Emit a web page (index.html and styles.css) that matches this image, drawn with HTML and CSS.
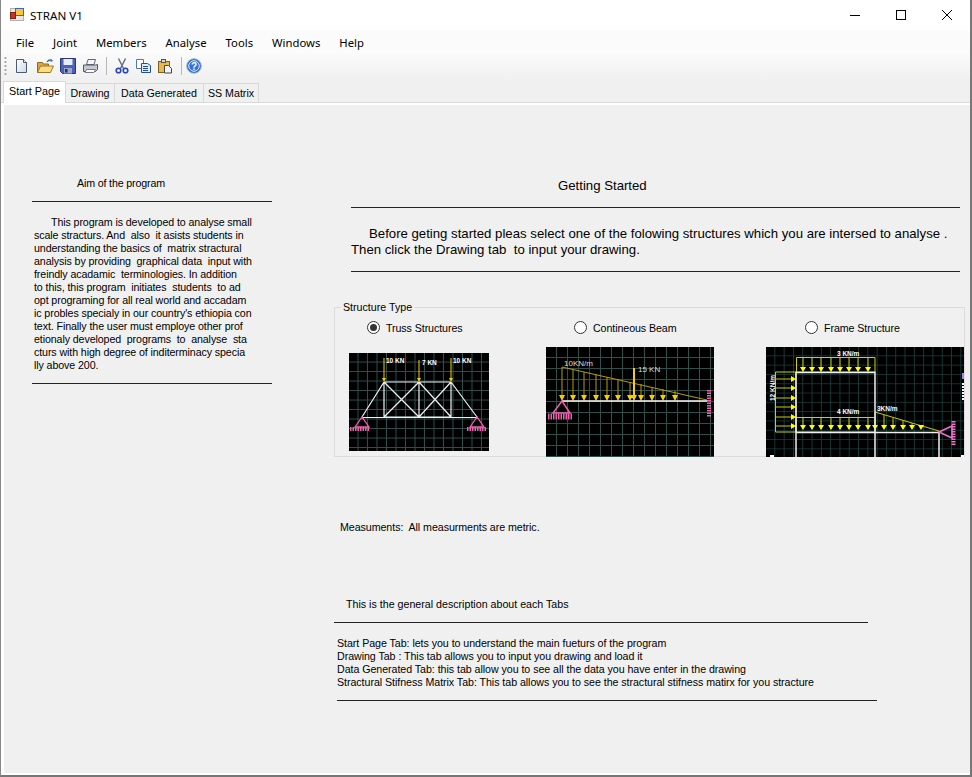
FILE: index.html
```html
<!DOCTYPE html>
<html lang="en">
<head>
<meta charset="utf-8">
<title>STRAN V1</title>
<link rel="stylesheet" href="styles.css">
</head>
<body>
<div class="window">
  <header class="titlebar">
    <svg class="appicon" width="16" height="16" viewBox="0 0 16 16"><rect x="1.500" y="1.500" width="13" height="12" fill="#e8e8e8" stroke="#b0b0b0"/><rect x="6.500" y="1.500" width="8" height="7" fill="#f5c542" stroke="#3a6ab0"/><rect x="1.500" y="5.500" width="5" height="6" fill="#d03020" stroke="#802010"/></svg>
    <span class="title">STRAN V1</span>
    <div class="winbtns">
      <svg width="12" height="12" viewBox="0 0 12 12"><path d="M1 6.500h10" stroke="#000" fill="none"/></svg>
      <svg width="12" height="12" viewBox="0 0 12 12"><rect x="1.500" y="1.500" width="9" height="9" stroke="#000" fill="none"/></svg>
      <svg width="12" height="12" viewBox="0 0 12 12"><path d="M1 1l10 10M11 1L1 11" stroke="#000" fill="none"/></svg>
    </div>
  </header>
  <nav class="menubar">
    <span>File</span><span>Joint</span><span>Members</span><span>Analyse</span><span>Tools</span><span>Windows</span><span>Help</span>
  </nav>
  <div class="toolbar">
    <svg class="grip" width="3" height="20" viewBox="0 0 3 20"><path d="M1.500 1v18" stroke="#aaa" stroke-width="2" stroke-dasharray="2 2"/></svg>
    <svg class="tool" width="16" height="16" viewBox="0 0 16 16"><defs><linearGradient id="pg" x1="0" y1="0" x2="1" y2="1"><stop offset="0" stop-color="#fff"/><stop offset="1" stop-color="#cfd8e6"/></linearGradient></defs><path d="M2.500 1.500h7l3 3v10h-10z" fill="url(#pg)" stroke="#4a5a70"/><path d="M9.500 1.500v3h3" fill="#e8eef6" stroke="#4a5a70"/></svg>
    <svg class="tool" width="18" height="16" viewBox="0 0 18 16"><path d="M1.500 4.500h5l1 1.500h5v8.500h-11z" fill="#d8a848" stroke="#8a6a20"/><path d="M1.500 14.500l3-6.500h13l-3 6.500z" fill="#f8dc88" stroke="#a07820"/><path d="M11 4q2-3 5-1.500" stroke="#3a6ab0" stroke-width="1.300" fill="none"/><path d="M15 1l2 2-2.500 1z" fill="#3a6ab0"/></svg>
    <svg class="tool" width="16" height="16" viewBox="0 0 16 16"><path d="M.5.5h15v15H2.500l-2-2z" fill="#4f5fb8" stroke="#2a3680"/><rect x="3.500" y="1" width="9" height="6" fill="#e8ecf8"/><rect x="4" y="10" width="8" height="5.500" fill="#9aa6d0"/><rect x="5" y="11" width="2.500" height="3.500" fill="#20306a"/></svg>
    <svg class="tool" width="16" height="16" viewBox="0 0 16 16"><path d="M4.500 6.500l1.500-5h7.500l-1.500 5z" fill="#f4f6fa" stroke="#667"/><path d="M1.500 7h12l2-.5v5l-2 2h-12z" fill="#c4cad4" stroke="#556"/><path d="M3 14.500h9l1.500-3h-9z" fill="#fff" stroke="#778"/></svg>
    <i class="sep"></i>
    <svg class="tool" width="14" height="16" viewBox="0 0 14 16"><path d="M3.500 .5l5 10M10.500 .5l-5 10" stroke="#687080" stroke-width="1.500" fill="none"/><circle cx="3.500" cy="12.500" r="2.300" fill="none" stroke="#2a44c0" stroke-width="1.600"/><circle cx="10.500" cy="12.500" r="2.300" fill="none" stroke="#2a44c0" stroke-width="1.600"/></svg>
    <svg class="tool" width="16" height="16" viewBox="0 0 16 16"><path d="M1.500 1.500h7v9h-7z" fill="#fff" stroke="#4a78b8"/><path d="M6.500 5.500h6l3 2v7h-9z" fill="#dfeaf8" stroke="#24508c"/><path d="M8 8.500h5M8 10.500h5M8 12.500h5" stroke="#24508c"/></svg>
    <svg class="tool" width="16" height="16" viewBox="0 0 16 16"><rect x="1.500" y="3.500" width="11" height="11" fill="#e8b848" stroke="#806020"/><rect x="4.500" y="1.500" width="4" height="3" fill="#d8d8d8" stroke="#555"/><path d="M7.500 7.500h4l3 3v4.500h-7z" fill="#f4f4f4" stroke="#444"/></svg>
    <i class="sep sep-last"></i>
    <svg class="tool tool-help" width="16" height="16" viewBox="0 0 16 16"><circle cx="8" cy="8" r="7.300" fill="#2a62c0" stroke="#9ab8e0"/><circle cx="8" cy="8" r="5.300" fill="#2f74d8" stroke="#e6f0fc"/><text class="helpq" x="8" y="11.500" text-anchor="middle">?</text></svg>
  </div>
  <div class="tabs">
    <span class="tab active">Start Page</span>
    <span class="tab t-draw">Drawing</span>
    <span class="tab t-data">Data Generated</span>
    <span class="tab t-ss">SS Matrix</span>
  </div>
  <main class="page">
    <aside class="aim">
      <h2 class="aim-head">Aim of the program</h2>
      <p class="aim-text"><span class="ind">This program is developed to analyse small</span><br>scale stracturs. And&nbsp; also&nbsp; it asists students in<br>understanding the basics of&nbsp; matrix stractural<br>analysis by providing&nbsp; graphical data&nbsp; input with<br>freindly acadamic&nbsp; terminologies. In addition<br>to this, this program&nbsp; initiates&nbsp; students&nbsp; to ad<br>opt programing for all real world and accadam<br>ic probles specialy in our country's ethiopia con<br>text. Finally the user must employe other prof<br>etionaly developed&nbsp; programs&nbsp; to&nbsp; analyse&nbsp; sta<br>cturs with high degree of inditerminacy specia<br>lly above 200.</p>
    </aside>
    <section class="main">
      <div class="start">
        <h1 class="start-head">Getting Started</h1>
        <p class="start-text"><span class="ind2">Before geting started pleas select one of the folowing structures which you are intersed to analyse .</span><br>Then click the Drawing tab&nbsp; to input your drawing.</p>
      </div>
      <fieldset class="types">
        <legend>Structure Type</legend>
        <div class="type type-truss">
          <label class="radio"><i class="dot on"></i>Truss Structures</label>
          <svg class="pic truss" width="140" height="98" viewBox="0 0 140 98">
            <defs>
              <pattern id="g1" width="9.500" height="9.500" patternUnits="userSpaceOnUse"><path d="M9 0v9.500M0 9h9.500" stroke="#2f4f4d" fill="none"/></pattern>
              <pattern id="g2" width="11" height="11" patternUnits="userSpaceOnUse"><path d="M10.500 0v11M0 10.500h11" stroke="#2f4f4d" fill="none"/></pattern>
              <pattern id="g3" width="9.300" height="9.300" patternUnits="userSpaceOnUse"><path d="M9 0v9.300M0 9h9.300" stroke="#1a4240" fill="none"/></pattern>
            </defs>
            <rect width="140" height="98" fill="#000"/><rect width="140" height="98" fill="url(#g1)"/>
            <path d="M35 29H102M35 64H102M13 64.500H128M13 64L35 29M102 29L128 64M35 29V64M70 29V64M102 29V64M35 29L70 64M70 29L35 64M70 29L102 64M102 29L70 64" stroke="#f2f2f2" stroke-width="1.200" fill="none"/>
            <path d="M35 5V26M70 7V26M102 5V26" stroke="#f4d000"/>
            <path d="M33 25h4l-2 4zM68 25h4l-2 4zM100 25h4l-2 4z" fill="#f4d000"/>
            <path d="M13 64L6 74H20ZM128 64L121 74H135Z" fill="none" stroke="#f060b0" stroke-width="1.300"/>
            <path d="M1 76H21M118 76H138" stroke="#f060b0" stroke-width="4" stroke-dasharray="1.500 1"/>
            <text class="lbl" x="37" y="10">10 KN</text><text class="lbl" x="73" y="12">7 KN</text><text class="lbl" x="104" y="10">10 KN</text>
          </svg>
        </div>
        <div class="type type-beam">
          <label class="radio"><i class="dot"></i>Contineous Beam</label>
          <svg class="pic beam" width="168" height="110" viewBox="0 0 168 110">
            <rect width="168" height="110" fill="#000"/><rect width="168" height="110" fill="url(#g2)"/>
            <path d="M16 20L161 53" stroke="#b89c00" fill="none"/>
            <path d="M16 20V49M27 22V49M38 25V49M50 27V49M61 30V49M72 32V49M84 35V49M95 37V49M106 40V49M117 42V49M129 44V49" stroke="#b89c00" fill="none"/>
            <path d="M88 21V49" stroke="#f4d000" stroke-width="2"/>
            <path d="M13 48h6l-3 6zM24 48h6l-3 6zM35 48h6l-3 6zM47 48h6l-3 6zM58 48h6l-3 6zM69 48h6l-3 6zM81 48h6l-3 6zM85 48h6l-3 6zM92 48h6l-3 6zM103 48h6l-3 6zM114 48h6l-3 6zM126 48h6l-3 6z" fill="#f4d000"/>
            <path d="M16 54H161" stroke="#fff" stroke-width="1.500"/>
            <path d="M16 54L7 66H24Z" fill="none" stroke="#f060b0" stroke-width="1.500"/>
            <path d="M2 69.500H27" stroke="#f060b0" stroke-width="6" stroke-dasharray="1.500 1"/>
            <path d="M163 43V70" stroke="#f060b0" stroke-width="4" stroke-dasharray="1.500 1"/>
            <text class="lbl big" x="18" y="18.500">10KN/m</text><text class="lbl big" x="92" y="25">15 KN</text>
          </svg>
        </div>
        <div class="type type-frame">
          <label class="radio"><i class="dot"></i>Frame Structure</label>
          <svg class="pic frame" width="198" height="110" viewBox="0 0 198 110">
            <rect width="198" height="110" fill="#000"/><rect width="198" height="110" fill="url(#g3)"/>
            <path d="M30.500 10.500H109V25H30.500ZM9.500 25H30V85H9.500ZM30 70.500H109V85H30Z" fill="none" stroke="#d0d000"/>
            <path d="M109 65L173 84M37 11V20M46 11V20M55 11V20M65 11V20M74 11V20M83 11V20M92 11V20M102 11V20M37 71V78M46 71V78M55 71V78M65 71V78M74 71V78M83 71V78M92 71V78M102 71V78M109 66V78M118 68V78M127 71V78M137 73V78M146 76V78M9 32H25M9 41H25M9 51H25M9 60H25M9 70H25M9 79H25" stroke="#c8c800" fill="none"/>
            <path d="M34 20h6l-3 5zM43 20h6l-3 5zM52 20h6l-3 5zM62 20h6l-3 5zM71 20h6l-3 5zM80 20h6l-3 5zM89 20h6l-3 5zM99 20h6l-3 5zM34 78h6l-3 5zM43 78h6l-3 5zM52 78h6l-3 5zM62 78h6l-3 5zM71 78h6l-3 5zM80 78h6l-3 5zM89 78h6l-3 5zM99 78h6l-3 5zM106 78h6l-3 5zM115 78h6l-3 5zM124 78h6l-3 5zM134 78h6l-3 5zM143 78h6l-3 5zM152 78h6l-3 5zM25 29v6l5-3zM25 38v6l5-3zM25 48v6l5-3zM25 57v6l5-3zM25 67v6l5-3zM25 76v6l5-3z" fill="#ffff00"/>
            <path d="M30 110V25.500H109V110M30 85.500H173V110" stroke="#f0f0f0" stroke-width="1.500" fill="none"/>
            <path d="M173 85L186 79V91Z" fill="none" stroke="#f070d0" stroke-width="1.500"/>
            <path d="M187.500 74V98" stroke="#f070d0" stroke-width="4" stroke-dasharray="1.500 1"/>
            <path d="M4 109h4M195 109h3" stroke="#fff" stroke-width="2"/>
            <path d="M197 26v6" stroke="#b080e0" stroke-width="2"/>
            <path d="M197 36v18" stroke="#fff" stroke-width="2" stroke-dasharray="2 1"/>
            <text class="lbl" x="71" y="9">3 KN/m</text><text class="lbl" x="71" y="67">4 KN/m</text><text class="lbl" x="111" y="64">3KN/m</text>
            <text class="lbl" transform="translate(9 54) rotate(-90)">12 KN/m</text>
          </svg>
        </div>
      </fieldset>
      <p class="measure">Measuments:&nbsp; All measurments are metric.</p>
      <div class="desc">
        <p class="desc-head">This is the general description about each Tabs</p>
        <p class="desc-text">Start Page Tab: lets you to understand the main fueturs of the program<br>Drawing Tab : This tab allows you to input you drawing and load it<br>Data Generated Tab: this tab allow you to see all the data you have enter in the drawing<br>Stractural Stifness Matrix Tab: This tab allows you to see the stractural stifness matirx for you stracture</p>
      </div>
    </section>
  </main>
</div>
</body>
</html>
```
FILE: styles.css
```css
* { box-sizing: border-box; }
html, body { margin: 0; height: 100%; background: #fff; }
body { font-family: "Liberation Sans", Arial, sans-serif; font-size: 10.67px; color: #000; overflow: hidden; }
.window { width: 972px; height: 777px; display: flex; flex-direction: column; border-right: 2px solid #777; border-bottom: 2px solid #777; border-left: 1px solid #888; }
.titlebar { height: 30px; flex: none; display: flex; align-items: center; background: #fff; padding-left: 8px; }
.appicon { flex: none; }
.title { margin-left: 5px; font-family: "Noto Sans", sans-serif; font-size: 11.6px; }
.winbtns { margin-left: auto; display: flex; gap: 34px; padding-right: 17px; align-items: center; }
.menubar { height: 24px; flex: none; display: flex; align-items: center; background: #fbfbfb; padding-left: 15px; gap: 19px; font-family: "Noto Sans", sans-serif; font-size: 11.3px; }
.toolbar { height: 26px; flex: none; display: flex; align-items: center; padding: 0 0 2px 3px; gap: 6px; background: linear-gradient(#fafafa, #f0f0f0); }
.grip { margin-right: 1px; }
.tool { flex: none; }
.tool-help { margin-left: -2px; }
.helpq { font-size: 10px; font-weight: 700; fill: #fff; }
.sep { width: 1px; height: 18px; background: #b8b8b8; margin: 0 2px; }
.sep-last { margin-right: 0; }
.tabs { height: 23px; flex: none; display: flex; align-items: flex-end; padding-left: 2px; background: #f0f0f0; border-bottom: 1px solid #d9d9d9; }
.tab { height: 19px; padding: 3px 0 0; text-align: center; background: #f0f0f0; border: 1px solid #d9d9d9; border-width: 1px 1px 0 0; white-space: nowrap; }
.tab.active { width: 63px; height: 22px; margin-bottom: -1px; padding-top: 3px; background: #fff; border-width: 1px 1px 0 1px; font-size: 10.8px; }
.t-draw { width: 49px; }
.t-data { width: 89px; }
.t-ss { width: 55px; }
.page { flex: 1; display: flex; background: #f0f0f0; border: solid #fff; border-width: 2px 0 2px 3px; }
.aim { width: 331px; flex: none; padding: 72px 0 0 28px; }
.aim-head { margin: 0; width: 240px; height: 25px; padding-left: 45px; font: inherit; line-height: 13px; letter-spacing: -.15px; border-bottom: 1px solid #222; }
.aim-text { margin: 14px 0 0; width: 240px; height: 168px; padding-left: 2px; line-height: 13px; letter-spacing: -.1px; border-bottom: 1px solid #222; }
.ind { padding-left: 17px; }
.main { flex: 1; min-width: 0; }
.start { width: 609px; margin: 72px 0 0 16px; }
.start-head { margin: 0; height: 31px; padding: 1px 0 0 207px; font: 400 13.2px "Liberation Sans", Arial, sans-serif; border-bottom: 1px solid #222; }
.start-text { margin: 0; padding-top: 18px; height: 64px; font-size: 13.2px; line-height: 16px; border-bottom: 1px solid #222; }
.ind2 { padding-left: 18px; }
.types { margin: 29px 0 0 -1px; padding: 0; width: 631px; height: 156px; border: 1px solid #dcdcdc; position: relative; }
.types legend { margin-left: 6px; padding: 0 2px; line-height: 13px; }
.type { position: absolute; top: 0; }
.type-truss { left: 14px; }
.type-beam { left: 211px; }
.type-frame { left: 431px; }
.radio { position: absolute; top: 7px; display: flex; align-items: center; white-space: nowrap; letter-spacing: -.08px; }
.type-truss .radio { left: 18px; }
.type-beam .radio { left: 28px; }
.type-frame .radio { left: 39px; }
.dot { width: 13px; height: 13px; border-radius: 50%; border: 1px solid #333; background: #fff; margin-right: 6px; position: relative; display: block; }
.dot.on::after { content: ""; position: absolute; left: 2px; top: 2px; width: 7px; height: 7px; border-radius: 50%; background: #333; }
.pic { display: block; position: absolute; left: 0; }
.truss { top: 39px; }
.beam { top: 33px; }
.frame { top: 33px; }
.lbl { font: 700 6.5px "Liberation Sans", Arial, sans-serif; fill: #fff; }
.lbl.big { font-weight: 400; font-size: 8px; fill: #ddd; }
.measure { margin: 64px 0 0 5px; letter-spacing: -.06px; }
.desc { margin-top: 65px; }
.desc-head { margin: 0 0 0 -1px; width: 534px; height: 25px; padding-left: 12px; border-bottom: 1px solid #222; }
.desc-text { margin: 14px 0 0 2px; width: 540px; height: 64px; line-height: 13px; letter-spacing: -.05px; border-bottom: 1px solid #222; }
```
